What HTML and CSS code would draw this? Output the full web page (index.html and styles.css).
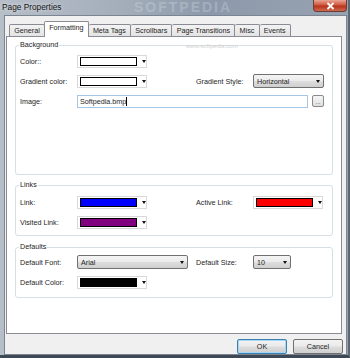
FILE: index.html
```html
<!DOCTYPE html>
<html lang="en">
  <head>
    <meta charset="UTF-8" />
    <title>Page Properties</title>
    <link rel="stylesheet" href="styles.css">
  </head>
  <body>
    <div class="window">
      <div class="titlebar">
        <span class="title">Page Properties</span>
        <span class="watermark">SOFTPEDIA</span>
        <div class="close">
          <svg width="9" height="8" viewBox="0 0 9 8">
            <path d="M1.5 1 L7.5 7 M7.5 1 L1.5 7" stroke="#fff" stroke-width="1.8" />
          </svg>
        </div>
      </div>

      <div class="client">
        <div class="tabs">
          <div class="tab">General</div>
          <div class="tab active">Formatting</div>
          <div class="tab">Meta Tags</div>
          <div class="tab">Scrollbars</div>
          <div class="tab">Page Transitions</div>
          <div class="tab">Misc</div>
          <div class="tab">Events</div>
        </div>

        <div class="panel">
          <span class="site-mark">www.softpedia.com</span>

          <fieldset class="group group-bg">
            <legend>Background</legend>
            <div class="rows">
              <label>Color::</label>
              <div class="color-combo"><span class="swatch" style="background:#fff"></span><span class="arrow"></span></div>
              <span></span><span></span>

              <label>Gradient color:</label>
              <div class="color-combo"><span class="swatch" style="background:#fff"></span><span class="arrow"></span></div>
              <label>Gradient Style:</label>
              <div class="select select-style">Horizontal<span class="arrow"></span></div>

              <label>Image:</label>
              <div class="file-row">
                <div class="text-input">Softpedia.bmp<span class="caret"></span></div>
                <div class="browse">...</div>
              </div>
            </div>
          </fieldset>

          <fieldset class="group group-links">
            <legend>Links</legend>
            <div class="rows">
              <label>Link:</label>
              <div class="color-combo"><span class="swatch" style="background:#0000ff"></span><span class="arrow"></span></div>
              <label>Active Link:</label>
              <div class="color-combo"><span class="swatch" style="background:#ff0000"></span><span class="arrow"></span></div>

              <label>Visited Link:</label>
              <div class="color-combo"><span class="swatch" style="background:#800080"></span><span class="arrow"></span></div>
              <span></span><span></span>
            </div>
          </fieldset>

          <fieldset class="group group-defaults">
            <legend>Defaults</legend>
            <div class="rows">
              <label>Default Font:</label>
              <div class="select select-font">Arial<span class="arrow"></span></div>
              <label>Default Size:</label>
              <div class="select select-size">10<span class="arrow"></span></div>

              <label>Default Color:</label>
              <div class="color-combo"><span class="swatch" style="background:#000"></span><span class="arrow"></span></div>
              <span></span><span></span>
            </div>
          </fieldset>
        </div>

        <div class="buttons">
          <button class="btn btn-default">OK</button>
          <button class="btn">Cancel</button>
        </div>
      </div>
    </div>
  </body>
</html>
```

FILE: styles.css
```css
body {
  margin: 0;
  font-family: "Liberation Sans", Arial, sans-serif;
  font-size: 7.2px;
  color: #1e1e1e;
  background: #fff;
}

.window {
  width: 350px;
  height: 358px;
  box-sizing: border-box;
  display: flex;
  flex-direction: column;
  background: linear-gradient(90deg, #b6bec8 0%, #a4aebb 35%, #8c99aa 60%, #98a3b1 100%);
  border-right: 2px solid #5d6875;
  border-bottom: 3px solid #3e4955;
}

.titlebar {
  height: 15px;
  position: relative;
  overflow: hidden;
}

.title {
  position: absolute;
  left: 2px;
  top: 2px;
  font-size: 8.3px;
  color: #141414;
  text-shadow: 0 0 4px rgba(255, 255, 255, 0.8);
}

.watermark {
  position: absolute;
  left: 134px;
  top: 0;
  font-size: 14px;
  line-height: 15px;
  font-weight: bold;
  letter-spacing: 2px;
  color: rgba(220, 228, 238, 0.3);
}

.close {
  position: absolute;
  right: 1px;
  top: 0;
  width: 32px;
  height: 11px;
  border: 1px solid #6b3b35;
  border-top: none;
  border-radius: 0 0 4px 4px;
  background: linear-gradient(#e8a493 0%, #d0583f 45%, #b8321c 55%, #cf6a50 100%);
  display: flex;
  align-items: center;
  justify-content: center;
}

.client {
  flex: 1;
  margin: 0 1px 0 4px;
  background: #f0f0f0;
  border: 1px solid #7b8591;
  display: flex;
  flex-direction: column;
}

.tabs {
  height: 20px;
  display: flex;
  align-items: flex-end;
  padding-left: 4px;
  position: relative;
  z-index: 1;
}

.tab {
  height: 11px;
  line-height: 11px;
  padding: 0 4.2px;
  border: 1px solid #898c95;
  border-bottom: none;
  border-left: none;
  background: linear-gradient(#f3f3f3, #e3e3e3);
  border-radius: 2px 2px 0 0;
}

.tab:first-child {
  border-left: 1px solid #898c95;
}

.tab.active {
  height: 15px;
  line-height: 12px;
  background: #fff;
  margin-bottom: -1px;
  border-left: 1px solid #898c95;
  margin-left: -1px;
}

.panel {
  position: relative;
  margin: 0 4px 0 1px;
  height: 293px;
  background: #fff;
  border: 1px solid #898c95;
  padding: 3px 8px 0 8px;
  display: flex;
  flex-direction: column;
  gap: 5px;
}

.site-mark {
  position: absolute;
  left: 179px;
  top: 6px;
  font-size: 6px;
  color: #d2d2d2;
  z-index: 1;
}

.group {
  margin: 0;
  padding: 1px 4px 0 4px;
  border: 1px solid #d5dfe5;
  border-radius: 3px;
  min-width: 0;
}

.group legend {
  padding: 0 1px;
  margin-left: -1px;
  line-height: 10px;
}

.group-bg {
  padding-bottom: 63px;
}

.group-links {
  padding-top: 2px;
  padding-bottom: 3px;
}

.group-defaults {
  padding-top: 0;
  padding-bottom: 5px;
  margin-top: 1px;
}

.rows {
  display: grid;
  grid-template-columns: 57px 119px 57px 1fr;
  grid-auto-rows: 20px;
  align-items: center;
}

.color-combo {
  width: 70px;
  height: 13px;
  border: 1px solid #d9d9d9;
  box-sizing: border-box;
  display: flex;
  align-items: center;
  padding-left: 2px;
  gap: 5px;
}

.swatch {
  width: 57px;
  height: 9px;
  box-sizing: border-box;
  border: 1px solid #000;
}

.arrow {
  width: 0;
  height: 0;
  border-left: 2.5px solid transparent;
  border-right: 2.5px solid transparent;
  border-top: 3px solid #111;
}

.select {
  height: 14px;
  box-sizing: border-box;
  border: 1px solid #707070;
  border-radius: 2px;
  background: linear-gradient(#f4f4f4 0%, #ebebeb 48%, #dddddd 52%, #cfcfcf 100%);
  display: flex;
  align-items: center;
  justify-content: space-between;
  padding: 0 3px 0 3px;
}

.select-style {
  width: 71px;
}

.select-font {
  width: 111px;
}

.select-size {
  width: 38px;
}

.file-row {
  grid-column: 2 / -1;
  display: flex;
  align-items: center;
  gap: 4px;
}

.text-input {
  width: 231px;
  height: 13px;
  box-sizing: border-box;
  border: 1px solid #a7c6e6;
  padding-left: 2px;
  display: flex;
  align-items: center;
}

.caret {
  width: 1px;
  height: 9px;
  background: #000;
}

.browse {
  width: 12px;
  height: 12px;
  box-sizing: border-box;
  border: 1px solid #8a8a8a;
  border-radius: 2px;
  background: linear-gradient(#f6f6f6, #dedede);
  font-size: 6px;
  text-align: center;
  line-height: 12px;
  color: #444;
}

.buttons {
  display: flex;
  justify-content: flex-end;
  gap: 6px;
  padding: 5px 3px 0 0;
}

.btn {
  width: 50px;
  height: 15px;
  padding: 0;
  font-family: inherit;
  font-size: 7.2px;
  color: #1e1e1e;
  border: 1px solid #707070;
  border-radius: 2px;
  background: linear-gradient(#f2f2f2 0%, #ebebeb 48%, #dddddd 52%, #cfcfcf 100%);
}

.btn-default {
  border-color: #3c7fb1;
  box-shadow: inset 0 0 0 1px #a6d6f2;
}
```
